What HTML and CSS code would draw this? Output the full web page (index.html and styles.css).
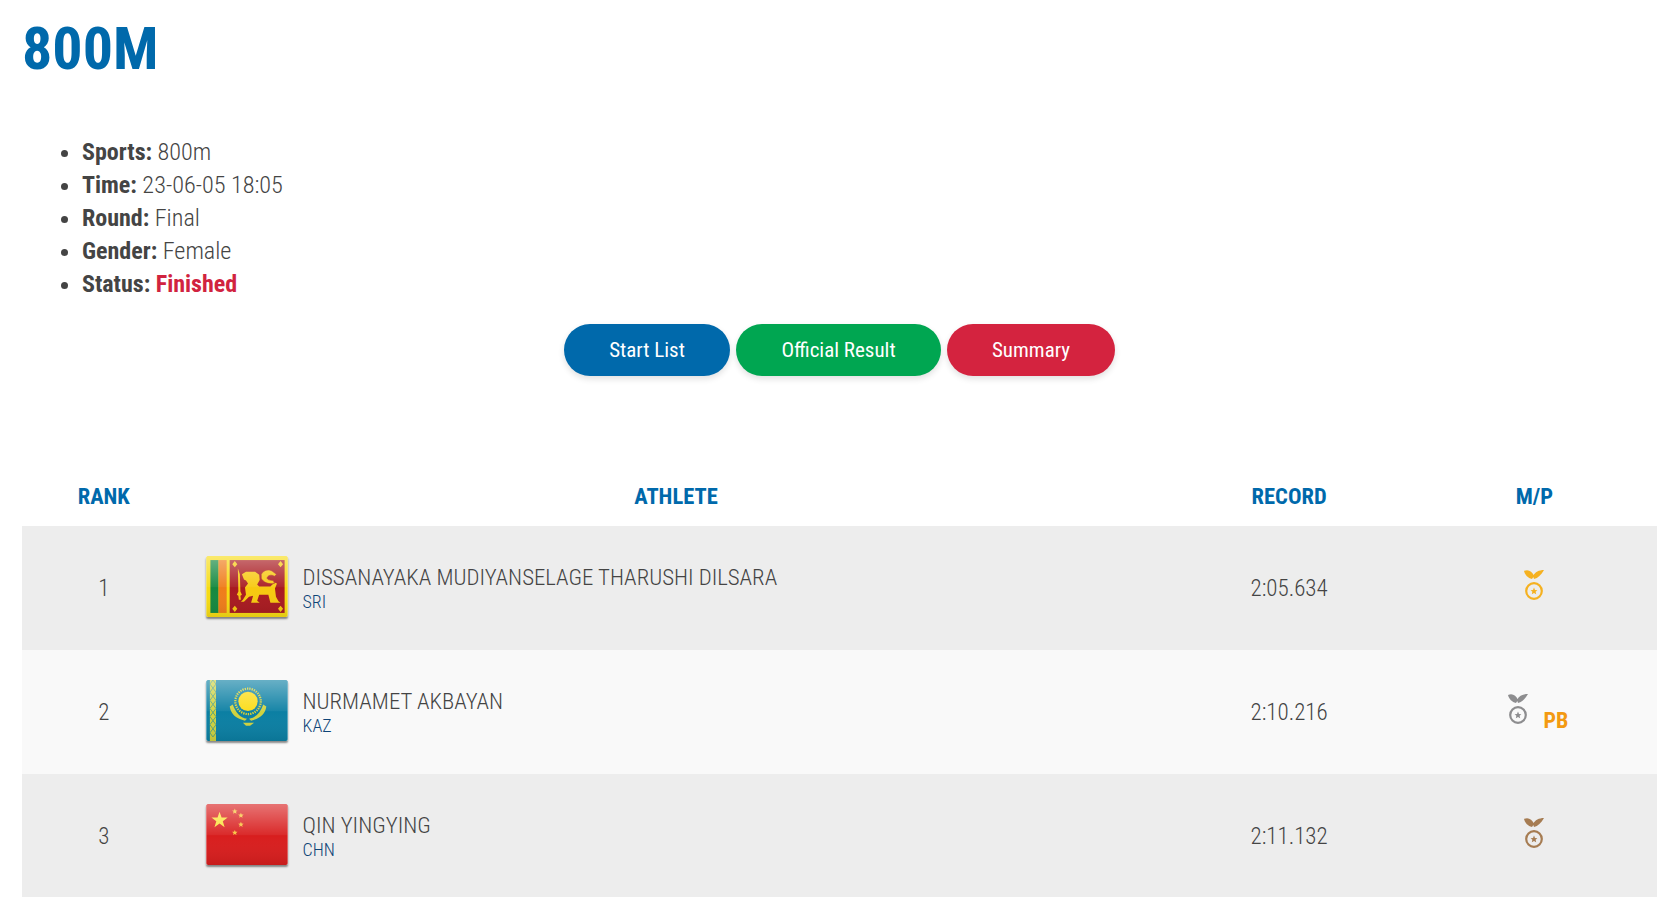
FILE: index.html
```html
<!DOCTYPE html>
<html lang="en">
<head>
<meta charset="utf-8">
<title>800M</title>
<link rel="stylesheet" href="styles.css">
</head>
<body>
<svg class="defs" width="0" height="0"><defs>
  <linearGradient id="gloss" x1="0" y1="0" x2="0" y2="1">
    <stop offset="0" stop-color="#fff" stop-opacity=".38"/>
    <stop offset=".5" stop-color="#fff" stop-opacity=".06"/>
    <stop offset=".52" stop-color="#fff" stop-opacity="0"/>
    <stop offset="1" stop-color="#000" stop-opacity=".08"/>
  </linearGradient>
  <g id="m">
    <path d="M0 2C4 0 8 2 10 7L8 10C4 9 1 6 0 2zM20 1C17 6 14 9 10 10L9 7C11 3 15 1 20 1z" fill="currentColor"/>
    <circle cx="10" cy="22" r="7.800" fill="none" stroke="currentColor" stroke-width="2.200"/>
    <polygon fill="currentColor" points="10,18.600 11,21 13.400,21.200 11.600,22.800 12.200,25.300 10,24 7.800,25.300 8.400,22.800 6.600,21.200 9,21"/>
  </g>
</defs></svg>
<main class="page">
  <h1 class="title">800M</h1>
  <ul class="facts">
    <li><b>Sports:</b> 800m</li>
    <li><b>Time:</b> 23-06-05 18:05</li>
    <li><b>Round:</b> Final</li>
    <li><b>Gender:</b> Female</li>
    <li><b>Status:</b> <b class="finished">Finished</b></li>
  </ul>
  <div class="actions">
    <a class="btn btn-blue">Start List</a>
    <a class="btn btn-green">Official Result</a>
    <a class="btn btn-red">Summary</a>
  </div>
  <table class="results">
    <thead>
      <tr><th class="c-rank">RANK</th><th class="c-ath">ATHLETE</th><th class="c-rec">RECORD</th><th class="c-mp">M/P</th></tr>
    </thead>
    <tbody>
      <tr class="odd">
        <td>1</td>
        <td><div class="athlete">
          <svg class="flag" viewBox="0 0 80 60">
            <rect width="80" height="60" rx="1.500" fill="#f7dc14"/>
            <rect x="4" y="4" width="8" height="52" fill="#14883f"/>
            <rect x="12" y="4" width="8" height="52" fill="#ef7d1a"/>
            <rect x="23" y="4" width="54" height="52" fill="#a81a20"/>
            <g fill="#f7c90f">
              <path d="M28 5l2.500 3L28 11l-2.500-3zM73 5l2.500 3L73 11l-2.500-3zM28 49l2.500 3L28 55l-2.500-3zM73 49l2.500 3L73 55l-2.500-3z"/>
              <path d="M31 12l2 6 .500 17 1.500 3-1.500 1 .500 4h-2l-.500-4-1.500-1 1.500-3z"/>
              <path d="M35 18l4-2.500h9l4 3 .500 5-2.500 4.500 2 2h11l4-4 2.500 1-2 5 1 8 2.500 4.500 2 1.500H63l-2-8h-9l-2 6 2.500 2H44l2-7-4 1-5 5h-3l2-2 3-5-1-7 3-4-2-3-2-1z"/>
            </g>
            <path d="M54 18c3-5 8-5 11-3l4 3-2 2c-3-2-6-1-7 1s2 3 6 3l1 3c-6 1-11-1-13-5z" fill="#f7c90f" stroke="#a81a20" stroke-width=".6"/>
            <rect width="80" height="60" rx="1.500" fill="url(#gloss)"/>
          </svg>
          <div><div class="name">DISSANAYAKA MUDIYANSELAGE THARUSHI DILSARA</div><div class="noc">SRI</div></div>
        </div></td>
        <td class="c-rec">2:05.634</td>
        <td class="c-mp"><svg class="medal gold" viewBox="0 0 20 32"><use href="#m"/></svg></td>
      </tr>
      <tr class="even">
        <td>2</td>
        <td><div class="athlete">
          <svg class="flag" viewBox="0 0 80 60">
            <rect width="80" height="60" rx="1.500" fill="#0b7fa3"/>
            <rect x="3.500" width="6" height="60" fill="#cfd23f"/>
            <path d="M6.500 0l3 4-3 4-3-4zM6.500 8l3 4-3 4-3-4zM6.500 16l3 4-3 4-3-4zM6.500 24l3 4-3 4-3-4zM6.500 32l3 4-3 4-3-4zM6.500 40l3 4-3 4-3-4zM6.500 48l3 4-3 4-3-4z" fill="none" stroke="#3f9a8f" stroke-width=".8"/>
            <circle cx="41" cy="21" r="12.500" fill="none" stroke="#dcd22f" stroke-width="2.200" stroke-dasharray="1.300 1"/>
            <circle cx="41" cy="21" r="9.500" fill="#fbdc15"/>
            <path d="M23 26c1 8 7 12 15 14l2-2c-7-1-11-6-14-14zM59 26c-1 8-7 12-15 14l-2-2c7-1 11-6 14-14z" fill="#cfd23f"/>
            <path d="M36 42h11l-4 3h-4z" fill="#cfd23f"/>
            <rect width="80" height="60" rx="1.500" fill="url(#gloss)"/>
          </svg>
          <div><div class="name">NURMAMET AKBAYAN</div><div class="noc">KAZ</div></div>
        </div></td>
        <td class="c-rec">2:10.216</td>
        <td class="c-mp"><span class="mp"><svg class="medal silver" viewBox="0 0 20 32"><use href="#m"/></svg><b class="pb">PB</b></span></td>
      </tr>
      <tr class="odd">
        <td>3</td>
        <td><div class="athlete">
          <svg class="flag" viewBox="0 0 80 60">
            <rect width="80" height="60" rx="1.500" fill="#d81e1e"/>
            <polygon fill="#fbe23c" points="13,7.500 15,13.200 21,13.300 16.200,17 18,22.800 13,19.300 8,22.800 9.800,17 5,13.300 11,13.200"/>
            <g fill="#f8c23a">
              <polygon points="28,4.500 28.800,6.300 30.700,6.400 29.200,7.700 29.700,9.500 28,8.500 26.300,9.500 26.800,7.700 25.300,6.400 27.200,6.300"/>
              <polygon points="34,8.500 34.800,10.300 36.700,10.400 35.200,11.700 35.700,13.500 34,12.500 32.300,13.500 32.800,11.700 31.300,10.400 33.200,10.300"/>
              <polygon points="34,17.500 34.800,19.300 36.700,19.400 35.200,20.700 35.700,22.500 34,21.500 32.300,22.500 32.800,20.700 31.300,19.400 33.200,19.300"/>
              <polygon points="28,25.500 28.800,27.300 30.700,27.400 29.200,28.700 29.700,30.500 28,29.500 26.300,30.500 26.800,28.700 25.300,27.400 27.200,27.300"/>
            </g>
            <rect width="80" height="60" rx="1.500" fill="url(#gloss)"/>
          </svg>
          <div><div class="name">QIN YINGYING</div><div class="noc">CHN</div></div>
        </div></td>
        <td class="c-rec">2:11.132</td>
        <td class="c-mp"><svg class="medal bronze" viewBox="0 0 20 32"><use href="#m"/></svg></td>
      </tr>
    </tbody>
  </table>
</main>
</body>
</html>
```
FILE: styles.css
```css
* { box-sizing: border-box; }
html, body { margin: 0; height: 897px; overflow: hidden; background: #fff; }
body { font-family: "Roboto", "Liberation Sans", sans-serif; font-stretch: 75%; color: #444; }
.page { padding: 0 23px 0 22px; }
.title { margin: 0; padding-top: 15px; font-size: 60px; line-height: 68px; font-weight: 700; color: #0069ab; }
.facts { margin: 53px 0 0; padding-left: 60px; font-size: 24.200px; line-height: 33px; font-weight: 300; }
.facts b { font-size: 24px; font-weight: 700; }
.facts .finished { color: #d1233f; }
.actions { display: flex; justify-content: center; gap: 6px; margin-top: 23px; }
.btn { display: flex; align-items: center; justify-content: center; height: 52px; border-radius: 26px; color: #fff; font-size: 21px; box-shadow: 0 3px 6px rgba(0,0,0,.12); }
.btn-blue { width: 166px; background: #0069ab; }
.btn-green { width: 205px; background: #00a651; }
.btn-red { width: 168px; background: #d4233f; }
.results { width: 100%; border-collapse: collapse; table-layout: fixed; margin-top: 90px; }
.c-rank { width: 10%; }
.c-ath { width: 60%; }
.c-rec, .c-mp { width: 15%; text-align: center; }
th { height: 60px; padding: 0; font-size: 22.500px; font-weight: 700; color: #0069ab; text-align: center; }
td { height: 124px; padding: 0; font-size: 23px; font-weight: 300; text-align: center; }
tr.odd { background: #ededed; }
tr.even { background: #f9f9f9; }
.athlete { display: flex; align-items: center; gap: 15px; padding-left: 20px; text-align: left; }
.flag { width: 82px; height: 61px; flex: none; margin-bottom: 3px; border-radius: 2px; box-shadow: 0 2px 2px rgba(0,0,0,.45); }
.name { font-size: 22.800px; line-height: 26px; color: #444; }
.noc { margin-top: 1px; font-size: 18px; line-height: 20px; font-weight: 300; color: #0f4577; }
.medal { width: 20px; height: 32px; vertical-align: middle; margin-bottom: 6px; }
.gold { color: #f5b120; }
.silver { color: #8d8d8f; }
.bronze { color: #a67c52; }
.mp { display: inline-flex; align-items: center; padding-left: 8px; }
.pb { margin: 16px 0 0 15px; font-size: 22px; font-weight: 700; color: #f39a12; }
.defs { position: absolute; }
```
